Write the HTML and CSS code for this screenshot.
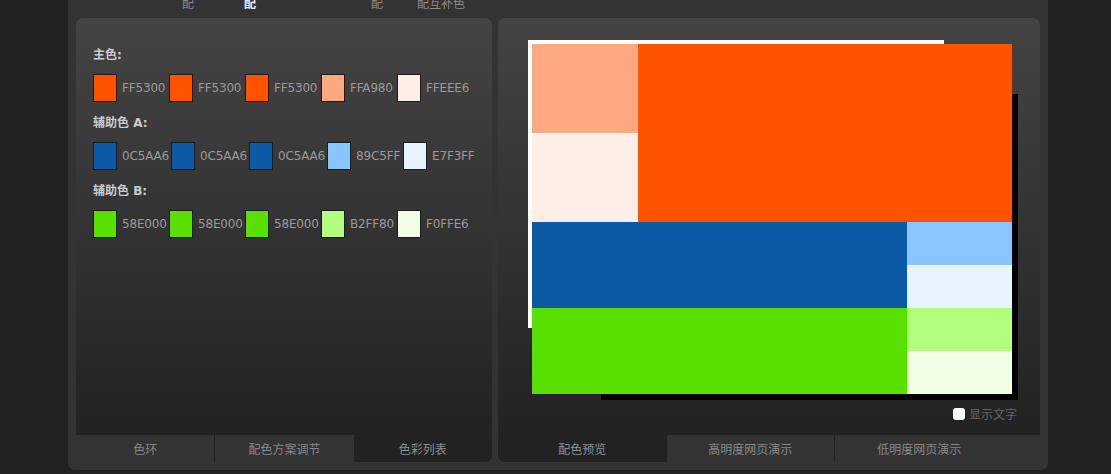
FILE: index.html
```html
<!DOCTYPE html>
<html lang="zh">
<head>
<meta charset="utf-8">
<title>配色</title>
<link rel="stylesheet" href="styles.css">
</head>
<body>
<div class="app">
  <div class="topnav">
    <span class="nav n1">配</span>
    <span class="nav n2 active">配</span>
    <span class="nav n3">配</span>
    <span class="nav n4">配互补色</span>
  </div>
  <div class="panels">
    <section class="panel left">
      <div class="content list">
        <div class="group">
          <div class="label">主色:</div>
          <div class="row">
            <span class="sw" style="background:#FF5300"></span><span class="code">FF5300</span>
            <span class="sw" style="background:#FF5300"></span><span class="code">FF5300</span>
            <span class="sw" style="background:#FF5300"></span><span class="code">FF5300</span>
            <span class="sw" style="background:#FFA980"></span><span class="code">FFA980</span>
            <span class="sw" style="background:#FFEEE6"></span><span class="code">FFEEE6</span>
          </div>
        </div>
        <div class="group">
          <div class="label">辅助色 A:</div>
          <div class="row">
            <span class="sw" style="background:#0C5AA6"></span><span class="code">0C5AA6</span>
            <span class="sw" style="background:#0C5AA6"></span><span class="code">0C5AA6</span>
            <span class="sw" style="background:#0C5AA6"></span><span class="code">0C5AA6</span>
            <span class="sw" style="background:#89C5FF"></span><span class="code">89C5FF</span>
            <span class="sw" style="background:#E7F3FF"></span><span class="code">E7F3FF</span>
          </div>
        </div>
        <div class="group">
          <div class="label">辅助色 B:</div>
          <div class="row">
            <span class="sw" style="background:#58E000"></span><span class="code">58E000</span>
            <span class="sw" style="background:#58E000"></span><span class="code">58E000</span>
            <span class="sw" style="background:#58E000"></span><span class="code">58E000</span>
            <span class="sw" style="background:#B2FF80"></span><span class="code">B2FF80</span>
            <span class="sw" style="background:#F0FFE6"></span><span class="code">F0FFE6</span>
          </div>
        </div>
      </div>
      <div class="tabs ltabs">
        <div class="tab sep">色环</div>
        <div class="tab">配色方案调节</div>
        <div class="tab active">色彩列表</div>
      </div>
    </section>
    <section class="panel right">
      <div class="content stage">
        <div class="preview">
          <div class="blk c-orange"></div>
          <div class="blk c-peach"></div>
          <div class="blk c-cream"></div>
          <div class="blk c-blue"></div>
          <div class="blk c-sky"></div>
          <div class="blk c-ice"></div>
          <div class="blk c-green"></div>
          <div class="blk c-lime"></div>
          <div class="blk c-mint"></div>
        </div>
        <label class="opt"><input type="checkbox" class="chk"><span>显示文字</span></label>
      </div>
      <div class="tabs rtabs">
        <div class="tab active">配色预览</div>
        <div class="tab sep">高明度网页演示</div>
        <div class="tab">低明度网页演示</div>
      </div>
    </section>
  </div>
</div>
</body>
</html>
```

FILE: styles.css
```css
html, body {
  margin: 0;
  padding: 0;
}
body {
  background: #212121;
  font-family: "DejaVu Sans", "Noto Sans CJK SC", sans-serif;
  font-size: 12px;
  color: #999;
}
.app {
  margin-left: 68px;
  width: 980px;
  height: 470px;
  box-sizing: border-box;
  padding: 0 8px 8px;
  background: #333333;
  border-radius: 0 0 7px 7px;
  display: flex;
  flex-direction: column;
}
.topnav {
  height: 18px;
  overflow: hidden;
  display: flex;
  align-items: flex-start;
  padding-left: 106px;
  font-family: "Noto Sans CJK SC", sans-serif;
}
.nav {
  line-height: 12px;
  margin-top: -3px;
  color: #8a8a8a;
}
.nav.active {
  color: #f2f4fa;
  font-weight: bold;
}
.n2 { margin-left: 50px; }
.n3 { margin-left: 115px; }
.n4 { margin-left: 34px; }

.panels {
  flex: 1;
  display: flex;
  gap: 6px;
}
.panel {
  border-radius: 7px;
  overflow: hidden;
  display: flex;
  flex-direction: column;
  background: #333333;
}
.panel.left { width: 416px; }
.panel.right { width: 542px; }
.content {
  flex: 1;
  background: linear-gradient(#444444, #222222);
}
.list {
  padding: 27px 0 0 17px;
}
.group {
  margin-bottom: 11px;
}
.label {
  line-height: 20px;
  height: 20px;
  color: #cccccc;
  font-weight: bold;
}
.row {
  margin-top: 9px;
  height: 28px;
  display: flex;
  align-items: center;
}
.sw {
  width: 24px;
  height: 28px;
  box-sizing: border-box;
  border: 1px solid #1c1c1c;
  margin-right: 5px;
  flex: none;
}
.code {
  min-width: 45px;
  padding-right: 2px;
  flex: none;
  white-space: nowrap;
  letter-spacing: -0.17px;
  color: #9a9a9a;
  line-height: 14px;
}

.tabs {
  height: 27px;
  display: flex;
  background: #333333;
  font-family: "Noto Sans CJK SC", sans-serif;
}
.tab {
  display: flex;
  align-items: center;
  justify-content: center;
  color: #888888;
  box-sizing: border-box;
}
.tab.active {
  background: #222222;
  color: #909090;
}
.tab.sep {
  border-right: 1px solid #222222;
}
.ltabs .tab { flex: 1; }
.rtabs .tab { width: 168.5px; }

.stage {
  display: flex;
  flex-direction: column;
  align-items: flex-start;
}
.preview {
  position: relative;
  isolation: isolate;
  margin: 26px 0 0 34px;
  width: 480px;
  height: 350px;
  display: grid;
  grid-template-columns: 106px 269px 105px;
  grid-template-rows: 89px 89px 43px 43px 43px 43px;
}
.preview::before {
  content: "";
  position: absolute;
  left: -4px;
  top: -4px;
  width: 416px;
  height: 288px;
  background: #ffffff;
  z-index: -1;
}
.preview::after {
  content: "";
  position: absolute;
  right: -6px;
  bottom: -6px;
  width: 417px;
  height: 306px;
  background: #000000;
  z-index: -1;
}
.c-orange { grid-column: 2 / 4; grid-row: 1 / 3; background: #FF5300; }
.c-peach  { grid-column: 1; grid-row: 1; background: #FFA980; }
.c-cream  { grid-column: 1; grid-row: 2; background: #FFEEE6; }
.c-blue   { grid-column: 1 / 3; grid-row: 3 / 5; background: #0C5AA6; }
.c-sky    { grid-column: 3; grid-row: 3; background: #89C5FF; }
.c-ice    { grid-column: 3; grid-row: 4; background: #E7F3FF; }
.c-green  { grid-column: 1 / 3; grid-row: 5 / 7; background: #58E000; }
.c-lime   { grid-column: 3; grid-row: 5; background: #B2FF80; }
.c-mint   { grid-column: 3; grid-row: 6; background: #F0FFE6; }

.opt {
  align-self: flex-end;
  margin: 13px 23px 0 0;
  display: flex;
  align-items: center;
  gap: 4px;
  color: #666666;
  font-family: "Noto Sans CJK SC", sans-serif;
  line-height: 13px;
}
.chk {
  appearance: none;
  -webkit-appearance: none;
  margin: 0;
  width: 12px;
  height: 12px;
  border-radius: 3px;
  background: #ffffff;
  border: none;
}
```
